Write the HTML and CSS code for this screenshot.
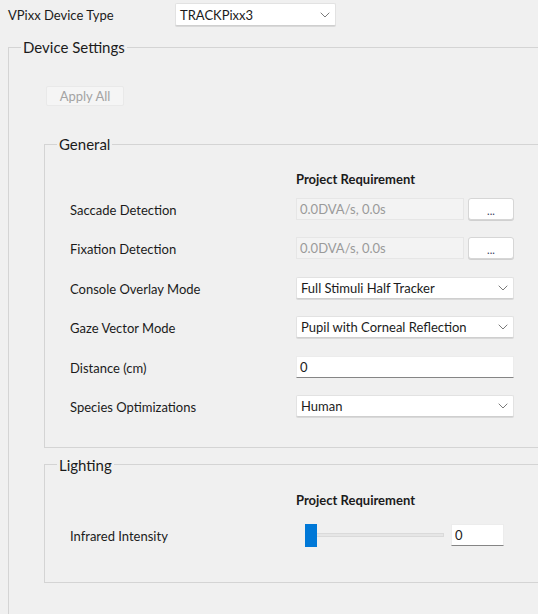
FILE: index.html
```html
<!DOCTYPE html>
<html lang="en">
<head>
  <meta charset="UTF-8">
  <title>VPixx Device Settings</title>
  <link rel="stylesheet" href="styles.css">
</head>
<body>
  <div class="top">
    <span class="top-label">VPixx Device Type</span>
    <div class="combo combo-top">
      <span>TRACKPixx3</span>
      <svg class="chev" width="10" height="6" viewBox="0 0 10 6"><path d="M0.7 0.7L5 5L9.3 0.7"/></svg>
    </div>
  </div>

  <fieldset class="group outer">
    <legend>Device Settings</legend>
    <div class="inner">
      <button class="apply" disabled>Apply All</button>

      <fieldset class="group general">
        <legend>General</legend>
        <div class="inner">
          <div class="req">Project Requirement</div>
          <div class="rows">
            <span class="lbl">Saccade Detection</span>
            <div class="pick">
              <div class="field disabled">0.0DVA/s, 0.0s</div>
              <button class="dots">...</button>
            </div>

            <span class="lbl">Fixation Detection</span>
            <div class="pick">
              <div class="field disabled">0.0DVA/s, 0.0s</div>
              <button class="dots">...</button>
            </div>

            <span class="lbl">Console Overlay Mode</span>
            <div class="combo">
              <span>Full Stimuli Half Tracker</span>
              <svg class="chev" width="10" height="6" viewBox="0 0 10 6"><path d="M0.7 0.7L5 5L9.3 0.7"/></svg>
            </div>

            <span class="lbl">Gaze Vector Mode</span>
            <div class="combo">
              <span>Pupil with Corneal Reflection</span>
              <svg class="chev" width="10" height="6" viewBox="0 0 10 6"><path d="M0.7 0.7L5 5L9.3 0.7"/></svg>
            </div>

            <span class="lbl">Distance (cm)</span>
            <div class="field edit">0</div>

            <span class="lbl">Species Optimizations</span>
            <div class="combo">
              <span>Human</span>
              <svg class="chev" width="10" height="6" viewBox="0 0 10 6"><path d="M0.7 0.7L5 5L9.3 0.7"/></svg>
            </div>
          </div>
        </div>
      </fieldset>

      <fieldset class="group lighting">
        <legend>Lighting</legend>
        <div class="inner">
          <div class="req">Project Requirement</div>
          <div class="light-row">
            <span class="lbl">Infrared Intensity</span>
            <div class="slider">
              <div class="track"></div>
              <div class="thumb"></div>
            </div>
            <div class="field edit small">0</div>
          </div>
        </div>
      </fieldset>
    </div>
  </fieldset>
</body>
</html>
```

FILE: styles.css
```css
html, body {
  margin: 0;
  background: #f0f0f0;
}

body {
  width: 538px;
  height: 614px;
  overflow: hidden;
  font-family: Lato, "Open Sans", sans-serif;
  font-size: 13px;
  color: #1b1b1b;
}

.top {
  display: flex;
  align-items: center;
  padding: 3px 0 0 8px;
  height: 23px;
}

.top-label {
  width: 167px;
}

.combo {
  display: flex;
  align-items: center;
  justify-content: space-between;
  box-sizing: border-box;
  height: 22px;
  padding: 0 5px 0 4px;
  background: #fff;
  border: 1px solid #e2e2e2;
  border-bottom-color: #cfcfcf;
  border-radius: 2px;
  box-shadow: 0 1px 0 #d9d9d9;
}

.combo-top {
  width: 161px;
  height: 23px;
}

.chev {
  fill: none;
  stroke: #7a7a7a;
  stroke-width: 1;
}

/* group boxes: right edge runs off the window, so no right border */
.group {
  margin: 0;
  min-width: 0;
  border: 1px solid #d4d4d4;
  border-right: none;
  padding: 0;
}

.group legend {
  font-size: 15px;
  line-height: 18px;
  padding: 0 2px;
  margin-left: 12px;
  color: #1b1b1b;
}

.outer {
  margin: 12px 0 0 8px;
}

.outer > .inner {
  padding: 30px 0 60px 35px;
}

.apply {
  display: block;
  margin-left: 2px;
  width: 78px;
  height: 20px;
  padding: 0;
  font-family: inherit;
  font-size: 13px;
  color: #a3a3a3;
  background: #f5f5f5;
  border: 1px solid #e9e9e9;
  border-radius: 2px;
}

.general {
  margin-top: 29px;
}

.general > .inner {
  padding: 18px 0 30px 25px;
}

.lighting {
  margin-top: 8px;
}

.lighting > .inner {
  padding: 18px 0 35px 25px;
}

.req {
  margin-left: 226px;
  font-weight: bold;
  line-height: 16px;
}

.rows {
  display: grid;
  grid-template-columns: 226px 218px;
  grid-auto-rows: 22px;
  row-gap: 17.4px;
  align-items: center;
  margin-top: 11px;
}

.lbl {
  line-height: 16px;
  padding-top: 2px;
}

.pick {
  display: flex;
  gap: 4px;
  height: 22px;
}

.field {
  box-sizing: border-box;
  height: 22px;
  line-height: 20px;
  padding: 0 3px;
  background: #fff;
}

.field.disabled {
  width: 168px;
  color: #9a9a9a;
  background: #f3f3f3;
  border: 1px solid #e6e6e6;
}

.field.edit {
  border: 1px solid #ececec;
  border-bottom: 1px solid #858585;
  color: #1b1b1b;
}

.dots {
  width: 46px;
  height: 22px;
  padding: 3px 0 0;
  font-family: inherit;
  font-size: 11px;
  line-height: 18px;
  color: #3a3a5a;
  background: #fff;
  border: 1px solid #d6d6d6;
  border-radius: 3px;
  box-shadow: 0 1px 0 #d0d0d0;
}

/* lighting row */
.light-row {
  display: flex;
  align-items: center;
  margin-top: 16px;
  height: 23px;
}

.light-row .lbl {
  width: 235px;
}

.slider {
  position: relative;
  width: 139px;
  height: 23px;
}

.track {
  margin-top: 9px;
  height: 4px;
  background: #e6e6e6;
  border: 1px solid #dadada;
  box-sizing: border-box;
}

.thumb {
  position: absolute;
  left: 0;
  top: 0;
  width: 12px;
  height: 23px;
  background: #0078d7;
}

.field.small {
  width: 53px;
  margin-left: 7px;
}
```
